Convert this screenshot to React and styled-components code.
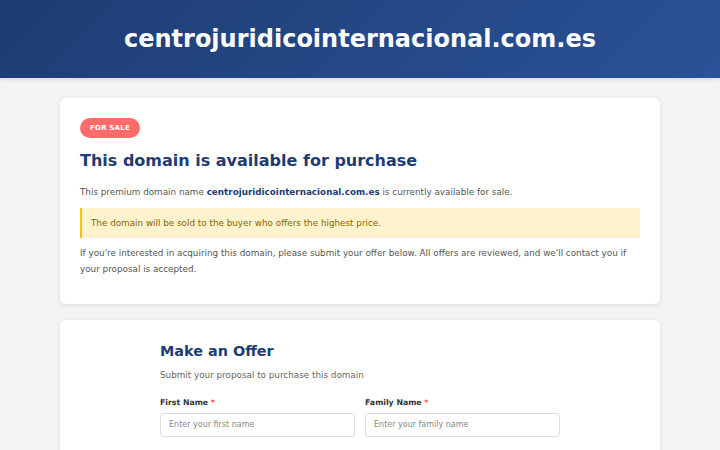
import React from 'react';
import styled, { createGlobalStyle } from 'styled-components';

const GlobalStyle = createGlobalStyle`
  * {
    box-sizing: border-box;
  }
  body {
    margin: 0;
    background: #f4f4f4;
    font-family: "DejaVu Sans", Verdana, sans-serif;
    color: #333;
  }
`;

const App = () => {
  return (
    <>
      <GlobalStyle />
      <Header>
        <SiteTitle>centrojuridicointernacional.com.es</SiteTitle>
      </Header>
      <Main>
        <Card>
          <Badge>FOR SALE</Badge>
          <Heading>This domain is available for purchase</Heading>
          <Text>
            This premium domain name <Strong>centrojuridicointernacional.com.es</Strong> is
            currently available for sale.
          </Text>
          <Notice>The domain will be sold to the buyer who offers the highest price.</Notice>
          <Text $last>
            If you're interested in acquiring this domain, please submit your offer below. All
            offers are reviewed, and we'll contact you if your proposal is accepted.
          </Text>
        </Card>
        <Card>
          <Form>
            <FormTitle>Make an Offer</FormTitle>
            <FormSubtitle>Submit your proposal to purchase this domain</FormSubtitle>
            <Row>
              <Field>
                <Label>
                  First Name <Req>*</Req>
                </Label>
                <Input placeholder="Enter your first name" />
              </Field>
              <Field>
                <Label>
                  Family Name <Req>*</Req>
                </Label>
                <Input placeholder="Enter your family name" />
              </Field>
            </Row>
            <Field>
              <Label>
                Email Address <Req>*</Req>
              </Label>
              <Input placeholder="Enter your email address" />
            </Field>
          </Form>
        </Card>
      </Main>
    </>
  );
};

const Header = styled.header`
  background: linear-gradient(135deg, #1e3c72 0%, #2a5298 100%);
  height: 78px;
  display: flex;
  align-items: center;
  justify-content: center;
  box-shadow: 0 2px 4px rgba(0, 0, 0, 0.1);
`;

const SiteTitle = styled.h1`
  margin: 0;
  color: #ffffff;
  font-size: 24px;
  font-weight: bold;
`;

const Main = styled.main`
  max-width: 640px;
  margin: 0 auto;
  padding: 20px;
  display: flex;
  flex-direction: column;
  gap: 16px;
`;

const Card = styled.section`
  background: #ffffff;
  border-radius: 6px;
  box-shadow: 0 1px 5px rgba(0, 0, 0, 0.1);
  padding: 20px;
  display: flex;
  flex-direction: column;
  align-items: stretch;
`;

const Badge = styled.span`
  align-self: flex-start;
  background: #ff6b6b;
  color: #ffffff;
  font-size: 7px;
  font-weight: bold;
  padding: 0 10px;
  height: 20px;
  line-height: 20px;
  border-radius: 10px;
  letter-spacing: 0.2px;
`;

const Heading = styled.h2`
  margin: 12.5px 0 14px;
  color: #1e3c72;
  font-size: 16px;
  font-weight: bold;
`;

const Text = styled.p`
  margin: 0 0 ${(p) => (p.$last ? '7px' : '8px')};
  font-size: 8.8px;
  line-height: 16px;
  color: #555;
`;

const Strong = styled.strong`
  color: #1e3c72;
`;

const Notice = styled.div`
  background: #fff3cd;
  border-left: 2px solid #ffc107;
  color: #856404;
  font-size: 8.8px;
  padding: 7px 9px;
  line-height: 16px;
  margin-bottom: 7px;
`;

const Form = styled.div`
  width: 100%;
  max-width: 400px;
  margin: 0 auto;
  padding-top: 3.5px;
`;

const FormTitle = styled.h3`
  margin: 0 0 10.5px;
  color: #1e3c72;
  font-size: 14.4px;
  font-weight: bold;
`;

const FormSubtitle = styled.p`
  margin: 0 0 18px;
  color: #666;
  font-size: 8.8px;
`;

const Row = styled.div`
  display: grid;
  grid-template-columns: 1fr 1fr;
  gap: 10px;
`;

const Field = styled.div`
  display: flex;
  flex-direction: column;
  margin-bottom: 12px;
`;

const Label = styled.label`
  font-size: 7.8px;
  font-weight: bold;
  color: #333;
  margin-bottom: 6.5px;
`;

const Req = styled.span`
  color: #e74c3c;
`;

const Input = styled.input`
  height: 23.5px;
  border: 1px solid #dddddd;
  border-radius: 3px;
  padding: 0 8px;
  font-family: "DejaVu Sans", Verdana, sans-serif;
  font-size: 8px;
  color: #333;
  &::placeholder {
    color: #888;
  }
`;

export default App;
